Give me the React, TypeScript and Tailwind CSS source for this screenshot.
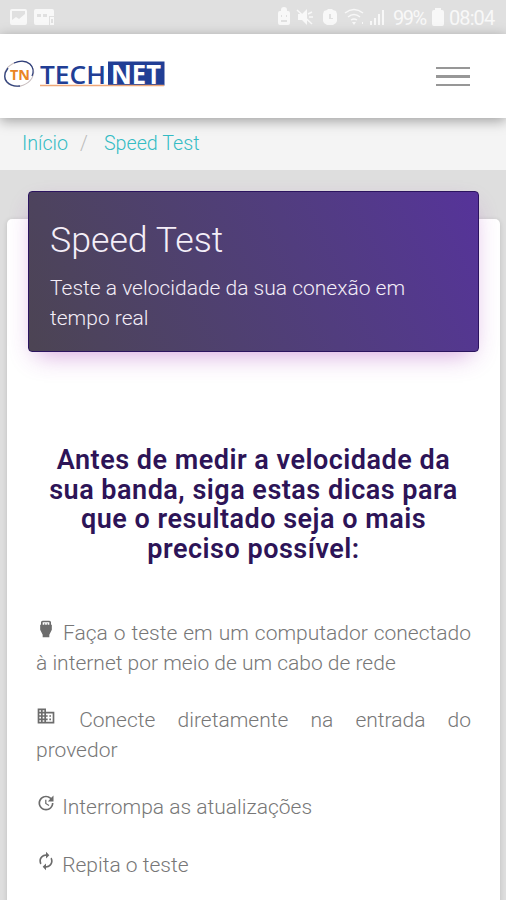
import type { ReactNode } from "react";
import {
  MdAutorenew,
  MdDomain,
  MdSettingsInputHdmi,
  MdUpdate,
} from "react-icons/md";

type TipProps = {
  icon: ReactNode;
  children: ReactNode;
};

function StatusBar() {
  return (
    <div className="flex h-[34px] items-center justify-between bg-[#e0e0e0] pr-[11px] pl-[10px] text-[#f8f8f8]">
      <svg width="45" height="18" viewBox="0 0 45 18" fill="currentColor">
        <path
          fillRule="evenodd"
          d="M2 1h13a2 2 0 0 1 2 2v12a2 2 0 0 1-2 2H2a2 2 0 0 1-2-2V3a2 2 0 0 1 2-2zm0 2v9l4-3 3 2 6-5V3z"
        />
        <path
          fillRule="evenodd"
          d="M26 1h16a2 2 0 0 1 2 2v5h-5v9H26a2 2 0 0 1-2-2V3a2 2 0 0 1 2-2zm1 5v3h4V6zm6 0v3h4V6zm7 3h4v8h-4zm1 2v4h2v-4z"
        />
      </svg>
      <div className="flex items-center">
        <svg width="109" height="20" viewBox="0 0 109 20" fill="currentColor">
          <path
            fillRule="evenodd"
            d="M3 4V3a3 3 0 0 1 6 0v1h1a2 2 0 0 1 2 2v10a2 2 0 0 1-2 2H2a2 2 0 0 1-2-2V6a2 2 0 0 1 2-2zm0 4v2h1V8zm5 0v2h1V8zm-5 5v2h6v-2z"
          />
          <path d="M20 7h4l5-5v16l-5-5h-4z" />
          <path d="M19 3l15 14M30 7l4-2M31 10h4" fill="none" stroke="currentColor" strokeWidth="1.5" />
          <path
            fillRule="evenodd"
            d="M46 4l3-1 1-1h4l1 1 3 1 1 3v7l-1 2-3 2h-6l-3-2-1-2V7zm5 3v5h4v-1h-2V7z"
          />
          <g fill="none" stroke="currentColor" strokeWidth="1.5">
            <path d="M67 6q9-7 18 0M70 10q6-5 12 0M73 13q3-2 6 0" />
          </g>
          <path d="M74 15h4l-2 3zM84 15h1v2h-1zM92 14h2v4h-2zM96 11h2v7h-2zM100 7h2v11h-2zM104 3h2v15h-2z" />
        </svg>
        <span className="mt-[2px] ml-[6px] w-[33px] text-[20px] leading-8 tracking-[-1.5px]">99%</span>
        <svg className="ml-[6px]" width="12" height="18" viewBox="0 0 12 18" fill="currentColor">
          <path d="M3 0h6v2h1a2 2 0 0 1 2 2v12a2 2 0 0 1-2 2H2a2 2 0 0 1-2-2V4a2 2 0 0 1 2-2h1z" />
        </svg>
        <span className="mt-[2px] ml-[5px] w-[46px] text-[20px] leading-8 tracking-[-0.9px]">08:04</span>
      </div>
    </div>
  );
}

function Logo() {
  return (
    <svg width="166" height="48" viewBox="0 -10 166 48" fontFamily="Open Sans, sans-serif" fontWeight="700">
      <ellipse cx="15" cy="14" rx="15" ry="12" transform="rotate(-20 15 14)" fill="none" stroke="#c9bfc0" />
      <path d="M10 3Q20-1 26 4q5 5 2 12" fill="none" stroke="#2b3c79" strokeWidth="1.2" />
      <path d="M4 8q-6 8-1 14 5 5 13 4" fill="none" stroke="#34467f" strokeWidth="1.4" />
      <text x="6" y="19.500" fontSize="15" fill="#ea8424" textLength="20" lengthAdjust="spacingAndGlyphs">TN</text>
      <path d="M104 1.500h56.500v24h-56.500z" fill="#213e95" />
      <text x="36" y="23.500" fontSize="26" fontWeight="600" fill="#213e95" textLength="66" lengthAdjust="spacingAndGlyphs">TECH</text>
      <text x="107" y="23.500" fontSize="27" fill="#fff" textLength="50" lengthAdjust="spacingAndGlyphs">NET</text>
      <path d="M36 25.500h124" stroke="#efa878" strokeWidth="1.5" />
    </svg>
  );
}

function Header() {
  return (
    <header className="relative flex h-[84px] items-center justify-between bg-white pr-9 pl-1 shadow-[0_3px_12px_rgba(0,0,0,0.35)]">
      <div className="-mt-[5px]">
        <Logo />
      </div>
      <button className="mt-px flex flex-col gap-[6px]" aria-label="Menu">
        <span className="h-[2.5px] w-[34px] bg-[#979797]" />
        <span className="h-[2.5px] w-[34px] bg-[#979797]" />
        <span className="h-[2.5px] w-[34px] bg-[#979797]" />
      </button>
    </header>
  );
}

function Tip({ icon, children }: TipProps) {
  return (
    <p className="mb-7 text-justify">
      <span className="mr-px inline-block h-[18px] align-[3px] text-[20px] leading-none text-[#6c6c6c]">{icon}</span>{" "}
      {children}
    </p>
  );
}

export default function App() {
  return (
    <div className="h-[900px] overflow-hidden bg-[#dedede] font-['Roboto',sans-serif]">
      <StatusBar />
      <Header />
      <nav className="flex h-[52px] items-center bg-[#f4f4f4] pl-[22px] text-[19.7px] font-light text-[#35bcc4]">
        <a>Início</a>
        <span className="mr-[16px] ml-[12px] text-[#bbb]">/</span>
        <a>Speed Test</a>
      </nav>
      <main className="mt-[49px] mr-[6px] ml-[7px] flow-root h-[720px] rounded-[5px] bg-white px-[29px] shadow-[0_1px_5px_rgba(0,0,0,0.15)]">
        <div className="relative -mx-2 -mt-[28px] h-[161px] rounded-[4px] border border-[#2b145f] bg-linear-65 from-[#4c4453] to-[#56339a] px-[21px] pt-[26px] font-light text-[#f4eef8] shadow-[0_10px_24px_-8px_rgba(156,39,176,0.45)]">
          <h4 className="text-[35.7px] leading-[44px]">Speed Test</h4>
          <p className="mt-[12px] text-[21px] leading-[29.5px]">Teste a velocidade da sua conexão em tempo real</p>
        </div>
        <h3 className="mt-[94px] text-center text-[27px] leading-[29.5px] font-semibold tracking-[0.5px] text-[#2d1457]">
          Antes de medir a velocidade da sua banda, siga estas dicas para que o resultado seja o mais preciso possível:
        </h3>
        <div className="mt-[55px] text-[21px] leading-[29.5px] font-light text-[#777]">
          <Tip icon={<MdSettingsInputHdmi />}>
            Faça o teste em um computador conectado à internet por meio de um cabo de rede
          </Tip>
          <Tip icon={<MdDomain />}>Conecte diretamente na entrada do provedor</Tip>
          <Tip icon={<MdUpdate />}>Interrompa as atualizações</Tip>
          <Tip icon={<MdAutorenew />}>Repita o teste</Tip>
        </div>
      </main>
    </div>
  );
}
